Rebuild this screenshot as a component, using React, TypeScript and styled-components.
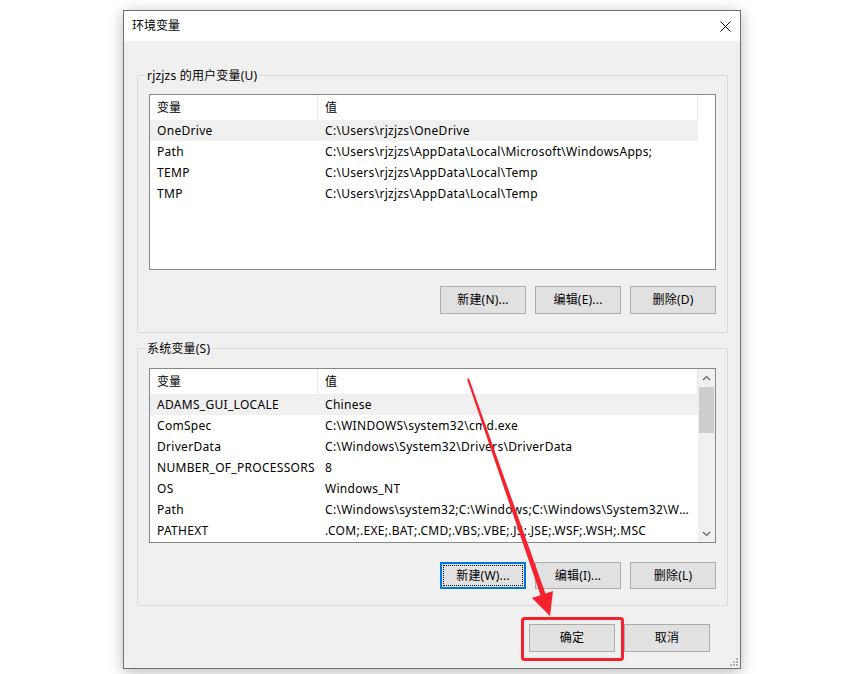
import React from "react";
import styled, { createGlobalStyle, css } from "styled-components";

const GlobalStyle = createGlobalStyle`
  html, body {
    margin: 0;
    padding: 0;
    background: #ffffff;
  }
  body {
    font-family: "Noto Sans", "Noto Sans CJK SC", sans-serif;
    font-size: 12px;
    color: #000;
  }
  * {
    box-sizing: border-box;
  }
`;

const Page = styled.div`
  position: relative;
  width: 857px;
  height: 674px;
  padding: 10px 0 0 123px;
`;

const Window = styled.div`
  position: relative;
  width: 618px;
  height: 659px;
  border: 1px solid #707070;
  background: #f0f0f0;
  box-shadow: 0 3px 14px rgba(0, 0, 0, 0.28);
  display: flex;
  flex-direction: column;
`;

const TitleBar = styled.div`
  height: 30px;
  flex: none;
  background: #ffffff;
  display: flex;
  align-items: center;
  justify-content: space-between;
  padding-left: 8px;
`;

const Title = styled.span`
  font-size: 12px;
  line-height: 16px;
`;

const CloseButton = styled.div`
  width: 30px;
  height: 30px;
  display: flex;
  align-items: center;
  justify-content: center;
`;

const Body = styled.div`
  flex: 1;
  display: flex;
  flex-direction: column;
  padding: 25px 12px 0 13px;
`;

const Group = styled.fieldset<{ $padTop: number; $padBottom: number; $gapTop?: number }>`
  margin: ${(p) => p.$gapTop ?? 0}px 0 0 0;
  padding: ${(p) => p.$padTop}px 11px ${(p) => p.$padBottom}px 11px;
  border: 1px solid #dcdcdc;
  min-width: 0;
`;

const Legend = styled.legend`
  margin-left: -4px;
  padding: 2px 2px 0 2px;
  font-size: 12px;
  line-height: 16px;
  letter-spacing: 0.2px;
`;

const ListView = styled.div<{ $height: number }>`
  height: ${(p) => p.$height}px;
  border: 1px solid #828790;
  background: #ffffff;
  display: flex;
  overflow: hidden;
`;

const Columns = styled.div`
  width: 548px;
  flex: none;
  display: flex;
  flex-direction: column;
`;

const HeaderRow = styled.div`
  display: grid;
  grid-template-columns: 168px 380px;
  height: 25px;
  flex: none;
`;

const HeaderCell = styled.div`
  padding-left: 7px;
  display: flex;
  align-items: center;
  border-right: 1px solid #e5e5e5;
  line-height: 16px;
`;

const Row = styled.div<{ $selected?: boolean }>`
  display: grid;
  grid-template-columns: 168px 380px;
  height: 21px;
  flex: none;
  background: ${(p) => (p.$selected ? "#f0f0f0" : "transparent")};
`;

const Cell = styled.div<{ $padRight: number }>`
  padding-left: 7px;
  padding-right: ${(p) => p.$padRight}px;
  display: flex;
  align-items: center;
  line-height: 16px;
  letter-spacing: 0.3px;
  white-space: nowrap;
  overflow: hidden;

  span {
    overflow: hidden;
    text-overflow: ellipsis;
  }
`;

const ScrollBar = styled.div`
  width: 17px;
  flex: none;
  background: #f0f0f0;
  display: flex;
  flex-direction: column;
`;

const ScrollArrow = styled.div`
  height: 17px;
  flex: none;
  display: flex;
  align-items: center;
  justify-content: center;
`;

const ScrollTrack = styled.div`
  flex: 1;
  padding: 1px 1px;
`;

const ScrollThumb = styled.div`
  height: 46px;
  background: #cdcdcd;
`;

const ButtonRow = styled.div<{ $gapTop: number }>`
  display: flex;
  justify-content: flex-end;
  gap: 9px;
  margin-top: ${(p) => p.$gapTop}px;
`;

const Button = styled.button<{ $focused?: boolean; $height?: number }>`
  width: 86px;
  height: ${(p) => p.$height ?? 28}px;
  padding: 0;
  background: #e1e1e1;
  border: 1px solid #adadad;
  border-radius: 0;
  font-family: inherit;
  font-size: 12px;
  line-height: 16px;
  letter-spacing: 0.2px;
  color: #000;

  ${(p) =>
    p.$focused &&
    css`
      border: 2px solid #0078d7;
      outline: 1px dotted #000;
      outline-offset: -4px;
    `}
`;

const Footer = styled.div`
  display: flex;
  justify-content: flex-end;
  gap: 9px;
  margin-top: 18px;
  padding-right: 18px;
`;

const SizeGrip = styled.svg`
  position: absolute;
  right: 1px;
  bottom: 1px;
`;

const Annotation = styled.svg`
  position: absolute;
  left: 0;
  top: 0;
  pointer-events: none;
`;

type EnvVar = { name: string; value: string };

const userVars: EnvVar[] = [
  { name: "OneDrive", value: "C:\\Users\\rjzjzs\\OneDrive" },
  { name: "Path", value: "C:\\Users\\rjzjzs\\AppData\\Local\\Microsoft\\WindowsApps;" },
  { name: "TEMP", value: "C:\\Users\\rjzjzs\\AppData\\Local\\Temp" },
  { name: "TMP", value: "C:\\Users\\rjzjzs\\AppData\\Local\\Temp" },
];

const systemVars: EnvVar[] = [
  { name: "ADAMS_GUI_LOCALE", value: "Chinese" },
  { name: "ComSpec", value: "C:\\WINDOWS\\system32\\cmd.exe" },
  { name: "DriverData", value: "C:\\Windows\\System32\\Drivers\\DriverData" },
  { name: "NUMBER_OF_PROCESSORS", value: "8" },
  { name: "OS", value: "Windows_NT" },
  {
    name: "Path",
    value:
      "C:\\Windows\\system32;C:\\Windows;C:\\Windows\\System32\\Wbem;C:\\Windows\\System32\\WindowsPowerShell\\v1.0\\",
  },
  { name: "PATHEXT", value: ".COM;.EXE;.BAT;.CMD;.VBS;.VBE;.JS;.JSE;.WSF;.WSH;.MSC" },
];

function VarList({ vars, height, scroll }: { vars: EnvVar[]; height: number; scroll?: boolean }) {
  return (
    <ListView $height={height}>
      <Columns>
        <HeaderRow>
          <HeaderCell>变量</HeaderCell>
          <HeaderCell>值</HeaderCell>
        </HeaderRow>
        {vars.map((v, i) => (
          <Row key={v.name + i} $selected={i === 0}>
            <Cell $padRight={0}>
              <span>{v.name}</span>
            </Cell>
            <Cell $padRight={2}>
              <span>{v.value}</span>
            </Cell>
          </Row>
        ))}
      </Columns>
      {scroll && (
        <ScrollBar>
          <ScrollArrow>
            <svg width="9" height="6" viewBox="0 0 9 6">
              <path d="M1 5 L4.5 1.5 L8 5" fill="none" stroke="#606060" strokeWidth="1.2" />
            </svg>
          </ScrollArrow>
          <ScrollTrack>
            <ScrollThumb />
          </ScrollTrack>
          <ScrollArrow>
            <svg width="9" height="6" viewBox="0 0 9 6">
              <path d="M1 1 L4.5 4.5 L8 1" fill="none" stroke="#606060" strokeWidth="1.2" />
            </svg>
          </ScrollArrow>
        </ScrollBar>
      )}
    </ListView>
  );
}

export default function App() {
  return (
    <>
      <GlobalStyle />
      <Page>
        <Window>
          <TitleBar>
            <Title>环境变量</Title>
            <CloseButton>
              <svg width="11" height="11" viewBox="0 0 11 11">
                <path d="M0.5 0.5 L10.5 10.5 M10.5 0.5 L0.5 10.5" stroke="#000" strokeWidth="1" />
              </svg>
            </CloseButton>
          </TitleBar>

          <Body>
            <Group $padTop={10} $padBottom={18}>
              <Legend>rjzjzs 的用户变量(U)</Legend>
              <VarList vars={userVars} height={176} />
              <ButtonRow $gapTop={16}>
                <Button>新建(N)...</Button>
                <Button>编辑(E)...</Button>
                <Button>删除(D)</Button>
              </ButtonRow>
            </Group>

            <Group $padTop={11} $padBottom={16} $gapTop={6}>
              <Legend>系统变量(S)</Legend>
              <VarList vars={systemVars} height={175} scroll />
              <ButtonRow $gapTop={19}>
                <Button $focused $height={27}>
                  新建(W)...
                </Button>
                <Button $height={27}>编辑(I)...</Button>
                <Button $height={27}>删除(L)</Button>
              </ButtonRow>
            </Group>

            <Footer>
              <Button>确定</Button>
              <Button>取消</Button>
            </Footer>
          </Body>

          <SizeGrip width="10" height="10" viewBox="0 0 10 10">
            {[
              [8, 2],
              [8, 5],
              [8, 8],
              [5, 5],
              [5, 8],
              [2, 8],
            ].map(([x, y]) => (
              <rect key={`${x}-${y}`} x={x - 1} y={y - 1} width="2" height="2" fill="#b0b0b0" />
            ))}
          </SizeGrip>
        </Window>

        <Annotation width="857" height="674" viewBox="0 0 857 674">
          <polygon points="467,379 469,378.5 547,598 542,599.5" fill="#f5222d" />
          <polygon points="532,598 553,591 550,616" fill="#f5222d" />
          <rect x="522.5" y="618.5" width="100" height="41" rx="2" fill="none" stroke="#f5222d" strokeWidth="3" />
        </Annotation>
      </Page>
    </>
  );
}
